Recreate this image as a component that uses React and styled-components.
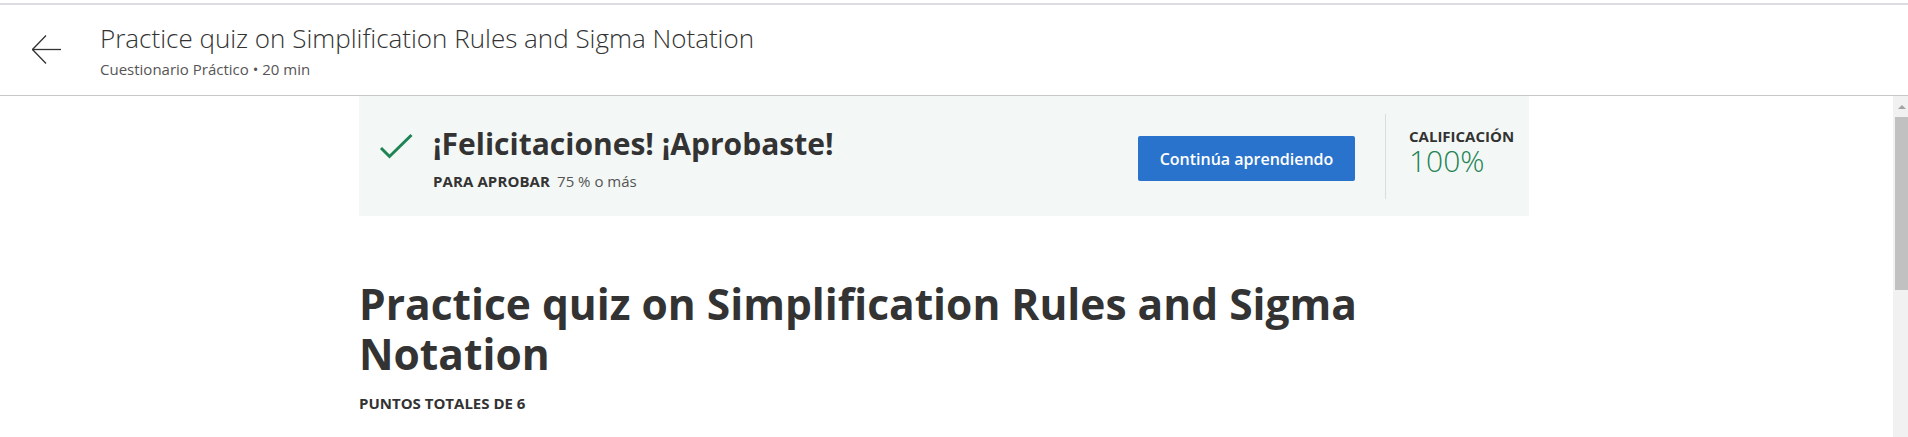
import React from 'react';
import styled, { createGlobalStyle } from 'styled-components';

const GlobalStyle = createGlobalStyle`
  * { box-sizing: border-box; }
  html, body { margin: 0; padding: 0; background: #fff; overflow: hidden; }
  body { font-family: "Open Sans", "Noto Sans", "Liberation Sans", sans-serif; color: #333; }
`;

const Page = styled.div`
  height: 437px;
  display: flex;
  flex-direction: column;
  padding-top: 3px;
`;

const Header = styled.header`
  height: 93px;
  flex-shrink: 0;
  display: flex;
  align-items: flex-start;
  border-top: 2px solid #dcdde2;
  border-bottom: 1px solid #c8c8c8;
`;

const BackButton = styled.button`
  width: 29px;
  height: 29px;
  margin: 30px 0 0 32px;
  padding: 0;
  border: 0;
  background: none;
  color: #333;
  display: flex;
  cursor: pointer;
`;

const TitleBlock = styled.div`
  margin: 18px 0 0 39px;
  display: flex;
  flex-direction: column;
`;

const PageTitle = styled.div`
  font-size: 26px;
  line-height: 30px;
  font-weight: 300;
  color: #333;
`;

const PageMeta = styled.div`
  margin-top: 6px;
  font-size: 15px;
  line-height: 20px;
  color: #555;
`;

const Main = styled.div`
  flex: 1;
  min-height: 0;
  display: flex;
`;

const Content = styled.main`
  flex: 1;
  padding-right: 5px;
`;

const Container = styled.div`
  width: 1170px;
  margin: 0 auto;
`;

const Banner = styled.section`
  height: 120px;
  background: #f3f8f6;
  display: flex;
  align-items: flex-start;
  padding-left: 20px;
`;

const LeftGroup = styled.div`
  flex: 1;
  display: flex;
  align-items: flex-start;
  padding-top: 30px;
`;

const CheckIcon = styled.svg`
  margin-top: 7px;
  flex-shrink: 0;
`;

const PassText = styled.div`
  margin-left: 20px;
  display: flex;
  flex-direction: column;
`;

const PassTitle = styled.h2`
  margin: 0;
  font-size: 30px;
  line-height: 36px;
  font-weight: 700;
  color: #333;
`;

const PassReq = styled.div`
  margin-top: 9px;
  font-size: 15px;
  line-height: 20px;
  color: #555;
`;

const Label = styled.span`
  font-weight: 700;
  color: #333;
  margin-right: 7px;
  letter-spacing: 0.1px;
  text-transform: uppercase;
`;

const PrimaryButton = styled.button`
  margin-top: 40px;
  width: 217px;
  height: 45px;
  border: 0;
  border-radius: 2px;
  background: #2a73cc;
  color: #fff;
  font-family: inherit;
  font-size: 16px;
  font-weight: 600;
  cursor: pointer;
`;

const Divider = styled.div`
  width: 1px;
  height: 85px;
  margin: 18px 23px 0 30px;
  background: #dcdcdc;
`;

const Grade = styled.div`
  width: 120px;
  margin-top: 31px;
  display: flex;
  flex-direction: column;
`;

const GradeLabel = styled.div`
  font-size: 15px;
  line-height: 18px;
  font-weight: 700;
  color: #333;
  text-transform: uppercase;
`;

const GradeValue = styled.div`
  font-size: 30px;
  line-height: 32px;
  font-weight: 300;
  color: #1f8354;
`;

const QuizTitle = styled.h1`
  margin: 63px 0 0;
  max-width: 1100px;
  font-size: 42.5px;
  line-height: 50px;
  font-weight: 700;
  color: #333;
`;

const Points = styled.div`
  margin-top: 14px;
  font-size: 15px;
  line-height: 20px;
  font-weight: 700;
  color: #333;
  text-transform: uppercase;
`;

const ScrollTrack = styled.div`
  width: 15px;
  flex-shrink: 0;
  background: #f1f1f1;
  display: flex;
  flex-direction: column;
`;

const ScrollArrow = styled.div`
  width: 0;
  height: 0;
  margin: 9px 0 0 5px;
  border-left: 4px solid transparent;
  border-right: 4px solid transparent;
  border-bottom: 4px solid #a3a3a3;
`;

const ScrollThumb = styled.div`
  width: 13px;
  height: 173px;
  margin: 8px 0 0 2px;
  background: #c1c1c1;
`;

export default function App() {
  return (
    <>
      <GlobalStyle />
      <Page>
        <Header>
          <BackButton aria-label="Volver">
            <svg width="29" height="29" viewBox="0 0 29 29" fill="none" stroke="currentColor" strokeWidth="1.3">
              <path d="M0.5 14.5 H29" />
              <path d="M14 0.5 L0.5 14.5 L14 28.5" />
            </svg>
          </BackButton>
          <TitleBlock>
            <PageTitle>Practice quiz on Simplification Rules and Sigma Notation</PageTitle>
            <PageMeta>Cuestionario Práctico • 20 min</PageMeta>
          </TitleBlock>
        </Header>
        <Main>
          <Content>
            <Container>
              <Banner>
                <LeftGroup>
                  <CheckIcon width="34" height="27" viewBox="0 0 34 27" fill="none" stroke="#1f8354" strokeWidth="3">
                    <path d="M2 15 L10.5 23.5 L32.5 2" />
                  </CheckIcon>
                  <PassText>
                    <PassTitle>¡Felicitaciones! ¡Aprobaste!</PassTitle>
                    <PassReq>
                      <Label>Para aprobar</Label>75 % o más
                    </PassReq>
                  </PassText>
                </LeftGroup>
                <PrimaryButton>Continúa aprendiendo</PrimaryButton>
                <Divider />
                <Grade>
                  <GradeLabel>Calificación</GradeLabel>
                  <GradeValue>100%</GradeValue>
                </Grade>
              </Banner>
              <QuizTitle>Practice quiz on Simplification Rules and Sigma Notation</QuizTitle>
              <Points>Puntos totales de 6</Points>
            </Container>
          </Content>
          <ScrollTrack>
            <ScrollArrow />
            <ScrollThumb />
          </ScrollTrack>
        </Main>
      </Page>
    </>
  );
}
